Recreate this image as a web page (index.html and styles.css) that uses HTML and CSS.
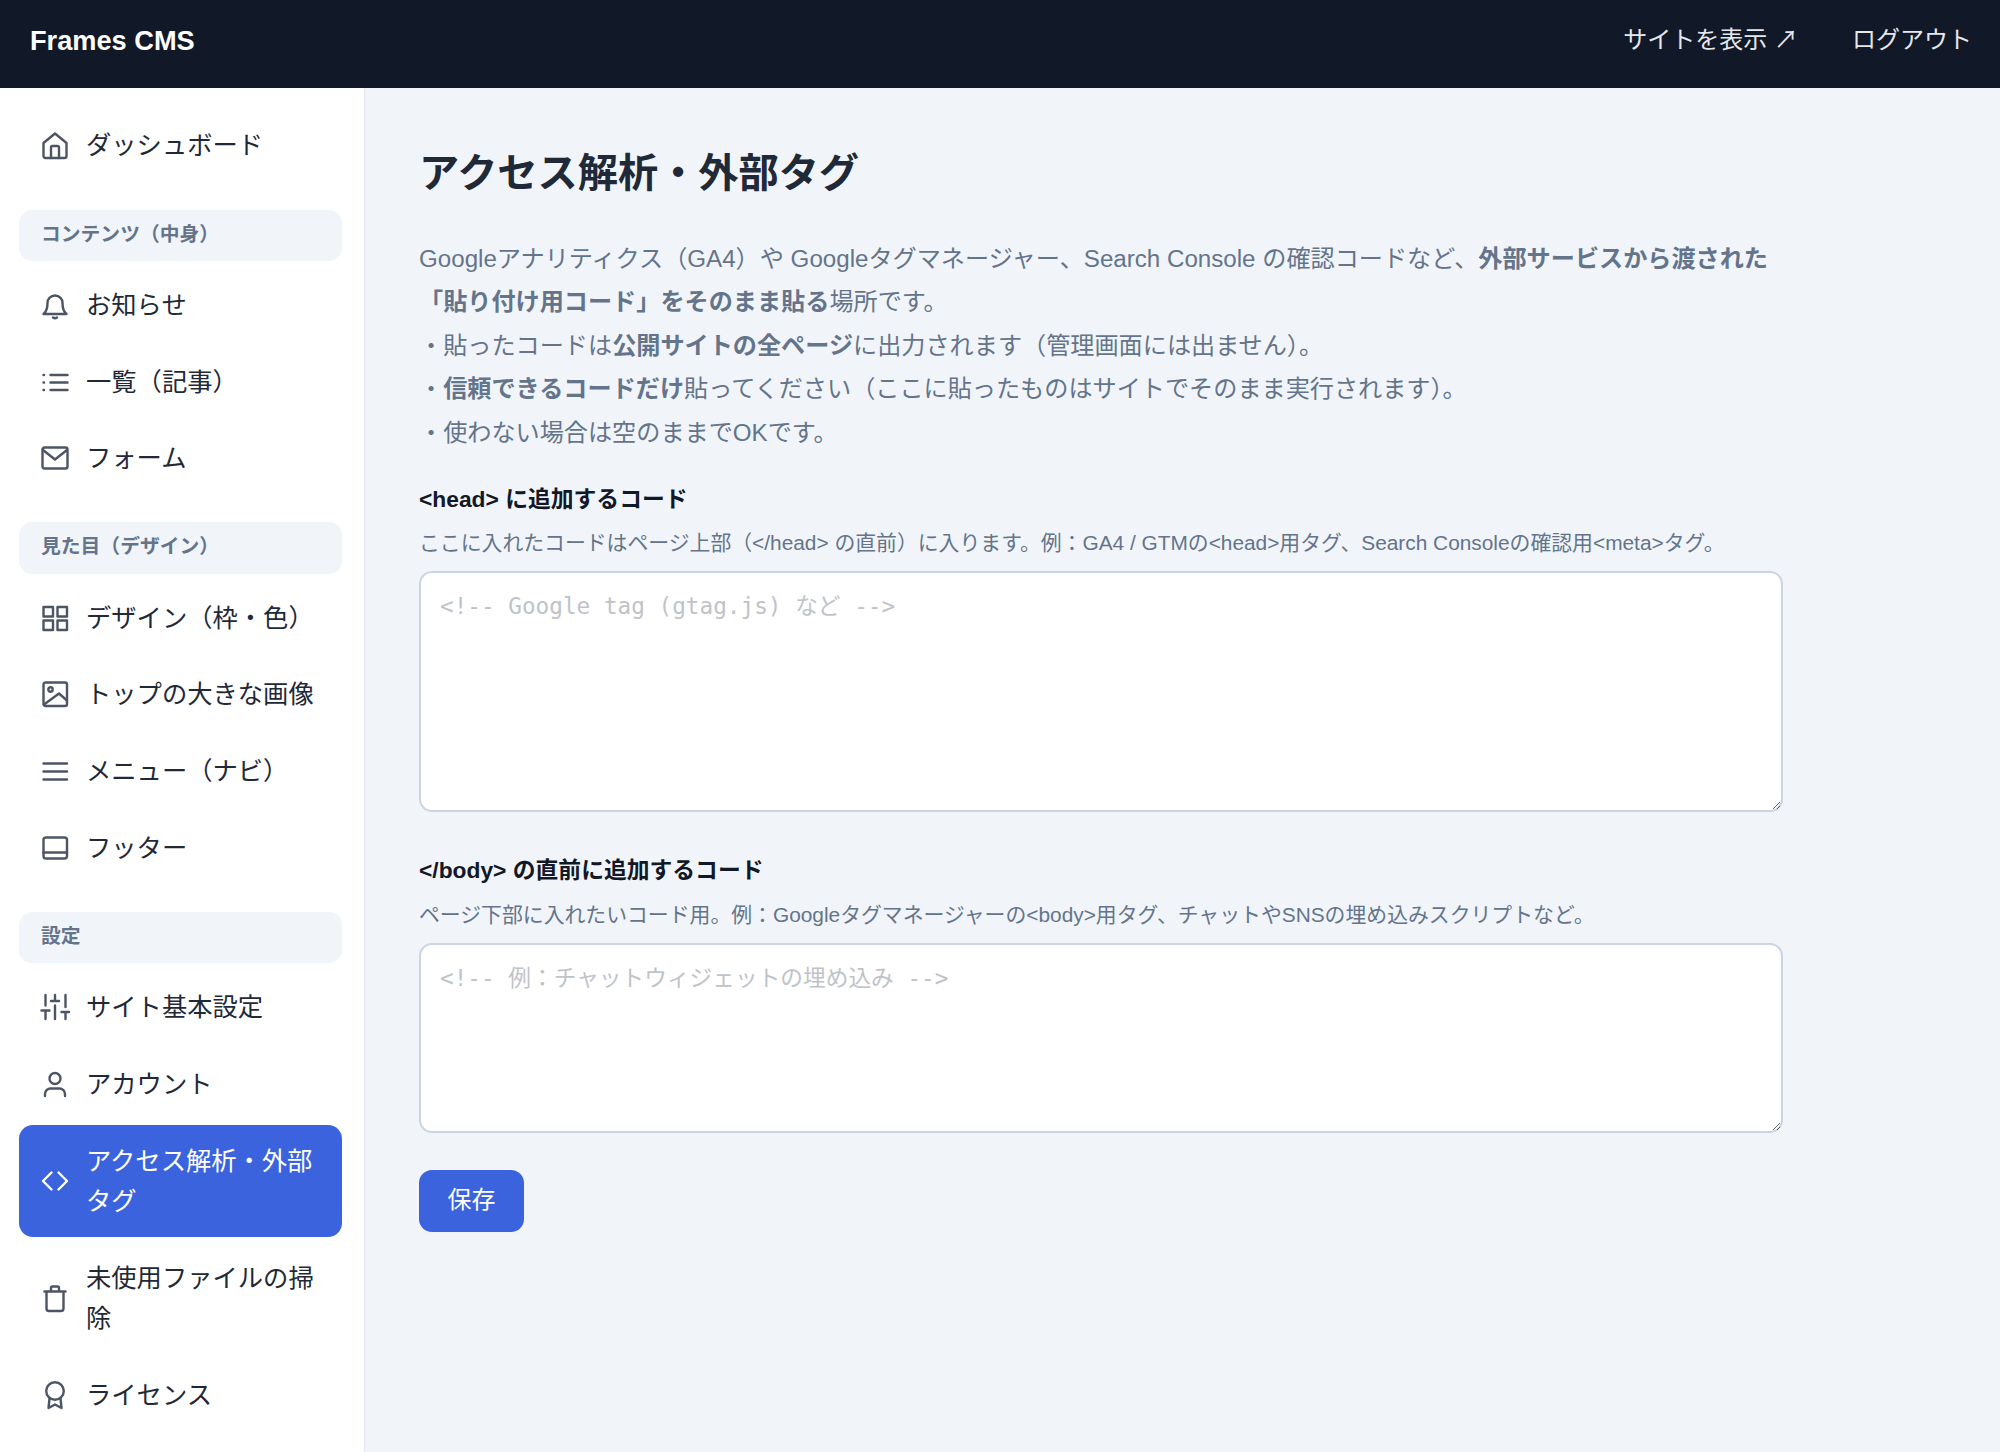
FILE: index.html
```html
<!DOCTYPE html>
<html lang="ja">
<head>
<meta charset="utf-8">
<title>アクセス解析・外部タグ - Frames CMS</title>
<link rel="stylesheet" href="styles.css">
</head>
<body>
<header class="topbar">
  <div class="brand">Frames CMS</div>
  <nav class="toplinks">
    <a class="toplink" href="#">サイトを表示 ↗</a>
    <a class="toplink" href="#">ログアウト</a>
  </nav>
</header>
<div class="layout">
  <aside class="sidebar">
    <a class="item" href="#">
      <svg class="icon" viewBox="0 0 28 28"><path d="M2.500 12 14 2.500 25.500 12V25a2 2 0 0 1-2 2H4.500a2 2 0 0 1-2-2Z"/><path d="M10 27V16.500a1.500 1.500 0 0 1 1.500-1.500h5a1.500 1.500 0 0 1 1.500 1.500V27"/></svg>
      <span>ダッシュボード</span>
    </a>
    <div class="section section-first">コンテンツ（中身）</div>
    <a class="item" href="#">
      <svg class="icon" viewBox="0 0 28 28"><path d="M2.500 23c2.700-2 4-5 4-11a7.500 7.500 0 0 1 15 0c0 6 1.300 9 4 11Z"/><path d="M12 26.500q2 1.500 4 0"/></svg>
      <span>お知らせ</span>
    </a>
    <a class="item" href="#">
      <svg class="icon" viewBox="0 0 28 28"><path d="M9.500 7H26.500M9.500 14.500H26.500M9.500 22H26.500"/><path d="M2.500 7h.5M2.500 14.500h.5M2.500 22h.5"/></svg>
      <span>一覧（記事）</span>
    </a>
    <a class="item" href="#">
      <svg class="icon" viewBox="0 0 28 28"><rect x="1.500" y="3.500" width="25" height="21" rx="2"/><path d="M2 6 14 15.500 26 6"/></svg>
      <span>フォーム</span>
    </a>
    <div class="section">見た目（デザイン）</div>
    <a class="item" href="#">
      <svg class="icon" viewBox="0 0 28 28"><rect x="2.500" y="3" width="9.500" height="9.500"/><rect x="16.500" y="3" width="9.500" height="9.500"/><rect x="2.500" y="16.500" width="9.500" height="9.500"/><rect x="16.500" y="16.500" width="9.500" height="9.500"/></svg>
      <span>デザイン（枠・色）</span>
    </a>
    <a class="item" href="#">
      <svg class="icon" viewBox="0 0 28 28"><rect x="2.500" y="2.500" width="23.500" height="23.500" rx="2"/><circle cx="9.500" cy="9.500" r="2.200"/><path d="M3 24.500 18 13.500 26 20.500"/></svg>
      <span>トップの大きな画像</span>
    </a>
    <a class="item" href="#">
      <svg class="icon" viewBox="0 0 28 28"><path d="M2.500 6.500H26M2.500 14.500H26M2.500 22.500H26"/></svg>
      <span>メニュー（ナビ）</span>
    </a>
    <a class="item" href="#">
      <svg class="icon" viewBox="0 0 28 28"><rect x="2.500" y="3.500" width="23.500" height="21" rx="2.500"/><path d="M2.500 18.500H26"/></svg>
      <span>フッター</span>
    </a>
    <div class="section">設定</div>
    <a class="item" href="#">
      <svg class="icon" viewBox="0 0 28 28"><path d="M4.500 26V17.500M4.500 12.500V2M14 26V12.500M14 7.500V2M24.500 26V19M24.500 14V2M0.500 17.500H8.500M10 8H18M20.500 19H28"/></svg>
      <span>サイト基本設定</span>
    </a>
    <a class="item" href="#">
      <svg class="icon" viewBox="0 0 28 28"><circle cx="14" cy="8.500" r="5.500"/><path d="M4 26V24a5.500 5.500 0 0 1 5.500-5.500h9A5.500 5.500 0 0 1 24 24v2"/></svg>
      <span>アカウント</span>
    </a>
    <a class="item item-active" href="#">
      <svg class="icon" viewBox="0 0 28 28"><path d="M10.500 5.500 2 14l8.500 8.500M17.500 5.500 26 14l-8.500 8.500"/></svg>
      <span>アクセス解析・外部タグ</span>
    </a>
    <a class="item item-low" href="#">
      <svg class="icon" viewBox="0 0 28 28"><path d="M3.500 7.500H24.500M5.500 7.500V24.500a2.500 2.500 0 0 0 2.500 2.500H20a2.500 2.500 0 0 0 2.500-2.500V7.500M10 7.500V4a1.500 1.500 0 0 1 1.500-1.500h5A1.500 1.500 0 0 1 18 4V7.500"/></svg>
      <span>未使用ファイルの掃除</span>
    </a>
    <a class="item" href="#">
      <svg class="icon" viewBox="0 0 28 28"><circle cx="14" cy="10" r="8.800"/><path d="M8.500 17.500 7.500 27 14 23.500 20.500 27 19.500 17.500"/></svg>
      <span>ライセンス</span>
    </a>
  </aside>
  <main class="main">
    <h1 class="title">アクセス解析・外部タグ</h1>
    <p class="intro">Googleアナリティクス（GA4）や Googleタグマネージャー、Search Console の確認コードなど、<strong>外部サービスから渡された<br>「貼り付け用コード」をそのまま貼る</strong>場所です。<br>・貼ったコードは<strong>公開サイトの全ページ</strong>に出力されます（管理画面には出ません）。<br>・<strong>信頼できるコードだけ</strong>貼ってください（ここに貼ったものはサイトでそのまま実行されます）。<br>・使わない場合は空のままでOKです。</p>
    <form class="form">
      <div class="field">
        <label class="label" for="head">&lt;head&gt; に追加するコード</label>
        <p class="hint">ここに入れたコードはページ上部（&lt;/head&gt; の直前）に入ります。例：GA4 / GTMの&lt;head&gt;用タグ、Search Consoleの確認用&lt;meta&gt;タグ。</p>
        <textarea class="code code-tall" id="head" placeholder="<!-- Google tag (gtag.js) など -->"></textarea>
      </div>
      <div class="field field-last">
        <label class="label" for="body">&lt;/body&gt; の直前に追加するコード</label>
        <p class="hint">ページ下部に入れたいコード用。例：Googleタグマネージャーの&lt;body&gt;用タグ、チャットやSNSの埋め込みスクリプトなど。</p>
        <textarea class="code code-short" id="body" placeholder="<!-- 例：チャットウィジェットの埋め込み -->"></textarea>
      </div>
      <button class="save" type="button">保存</button>
    </form>
  </main>
</div>
</body>
</html>
```

FILE: styles.css
```css
* { box-sizing: border-box; }
html, body { margin: 0; height: 100%; }
body {
  display: flex;
  flex-direction: column;
  height: 1452px;
  overflow: hidden;
  background: #f1f5f9;
  color: #1f2937;
  font-family: "Liberation Sans", "Noto Sans CJK JP", sans-serif;
}
a { text-decoration: none; color: inherit; }

.topbar {
  flex: none;
  height: 88px;
  padding: 0 28px 8px 30px;
  display: flex;
  align-items: center;
  justify-content: space-between;
  background: #111827;
  color: #fff;
}
.brand { padding-top: 1px; font-size: 27.2px; font-weight: 700; }
.toplinks { display: flex; gap: 54px; padding-bottom: 5px; }
.toplink { font-size: 24px; color: #e5e7eb; }

.layout { flex: 1; display: flex; min-height: 0; }

.sidebar {
  flex: none;
  width: 365px;
  padding: 20.6px 22px 0 19px;
  display: flex;
  flex-direction: column;
  gap: 4.8px;
  background: #fff;
  border-right: 1px solid #e5e7eb;
}
.item {
  display: flex;
  align-items: center;
  gap: 17px;
  padding: 16px 22px;
  border-radius: 14px;
  font-size: 25.3px;
  line-height: 40px;
  color: #1f2937;
}
.item-active { background: #3b63de; color: #fff; }
.item-low { margin-top: 1px; }
.icon {
  flex: none;
  width: 28px;
  height: 28px;
  overflow: visible;
  fill: none;
  stroke: #4b5563;
  stroke-width: 2.4;
  stroke-linecap: round;
  stroke-linejoin: round;
}
.item-active .icon { stroke: #fff; }
.section {
  margin: 23.2px 0 3.2px;
  padding: 0 22px;
  height: 51.2px;
  line-height: 49px;
  border-radius: 13px;
  background: #f1f5f9;
  font-size: 19.8px;
  font-weight: 700;
  color: #64748b;
}
.section-first { margin-top: 24.2px; }

.main { flex: 1; min-width: 0; padding: 60px 54px 0; }
.title {
  margin: 0 0 37px;
  font-size: 40.2px;
  line-height: 52px;
  font-weight: 700;
  color: #1f2937;
}
.intro {
  margin: 0 0 26.5px;
  font-size: 24.15px;
  line-height: 43.4px;
  color: #64748b;
}
.form { width: 1364px; }
.field { margin-bottom: 40px; }
.field-last { margin-bottom: 37.5px; }
.label {
  display: block;
  margin-bottom: 7.5px;
  font-size: 22.8px;
  line-height: 36px;
  font-weight: 700;
  color: #111827;
}
.hint {
  margin: 0 0 10px;
  font-size: 20.85px;
  line-height: 37px;
  color: #64748b;
}
.code {
  display: block;
  width: 100%;
  padding: 11px 19px;
  border: 2px solid #cbd5e1;
  border-radius: 13px;
  background: #fff;
  font-family: "DejaVu Sans Mono", "Noto Sans CJK JP", monospace;
  font-size: 22.7px;
  line-height: 44px;
  color: #1f2937;
}
.code::placeholder { color: #bfc3c9; opacity: 1; }
.code-tall { height: 241px; }
.code-short { height: 190px; }
.save {
  display: block;
  width: 105px;
  height: 62px;
  padding: 0 0 7px;
  border: 0;
  border-radius: 13px;
  background: #3b63de;
  color: #fff;
  font-family: inherit;
  font-size: 24px;
}
```
